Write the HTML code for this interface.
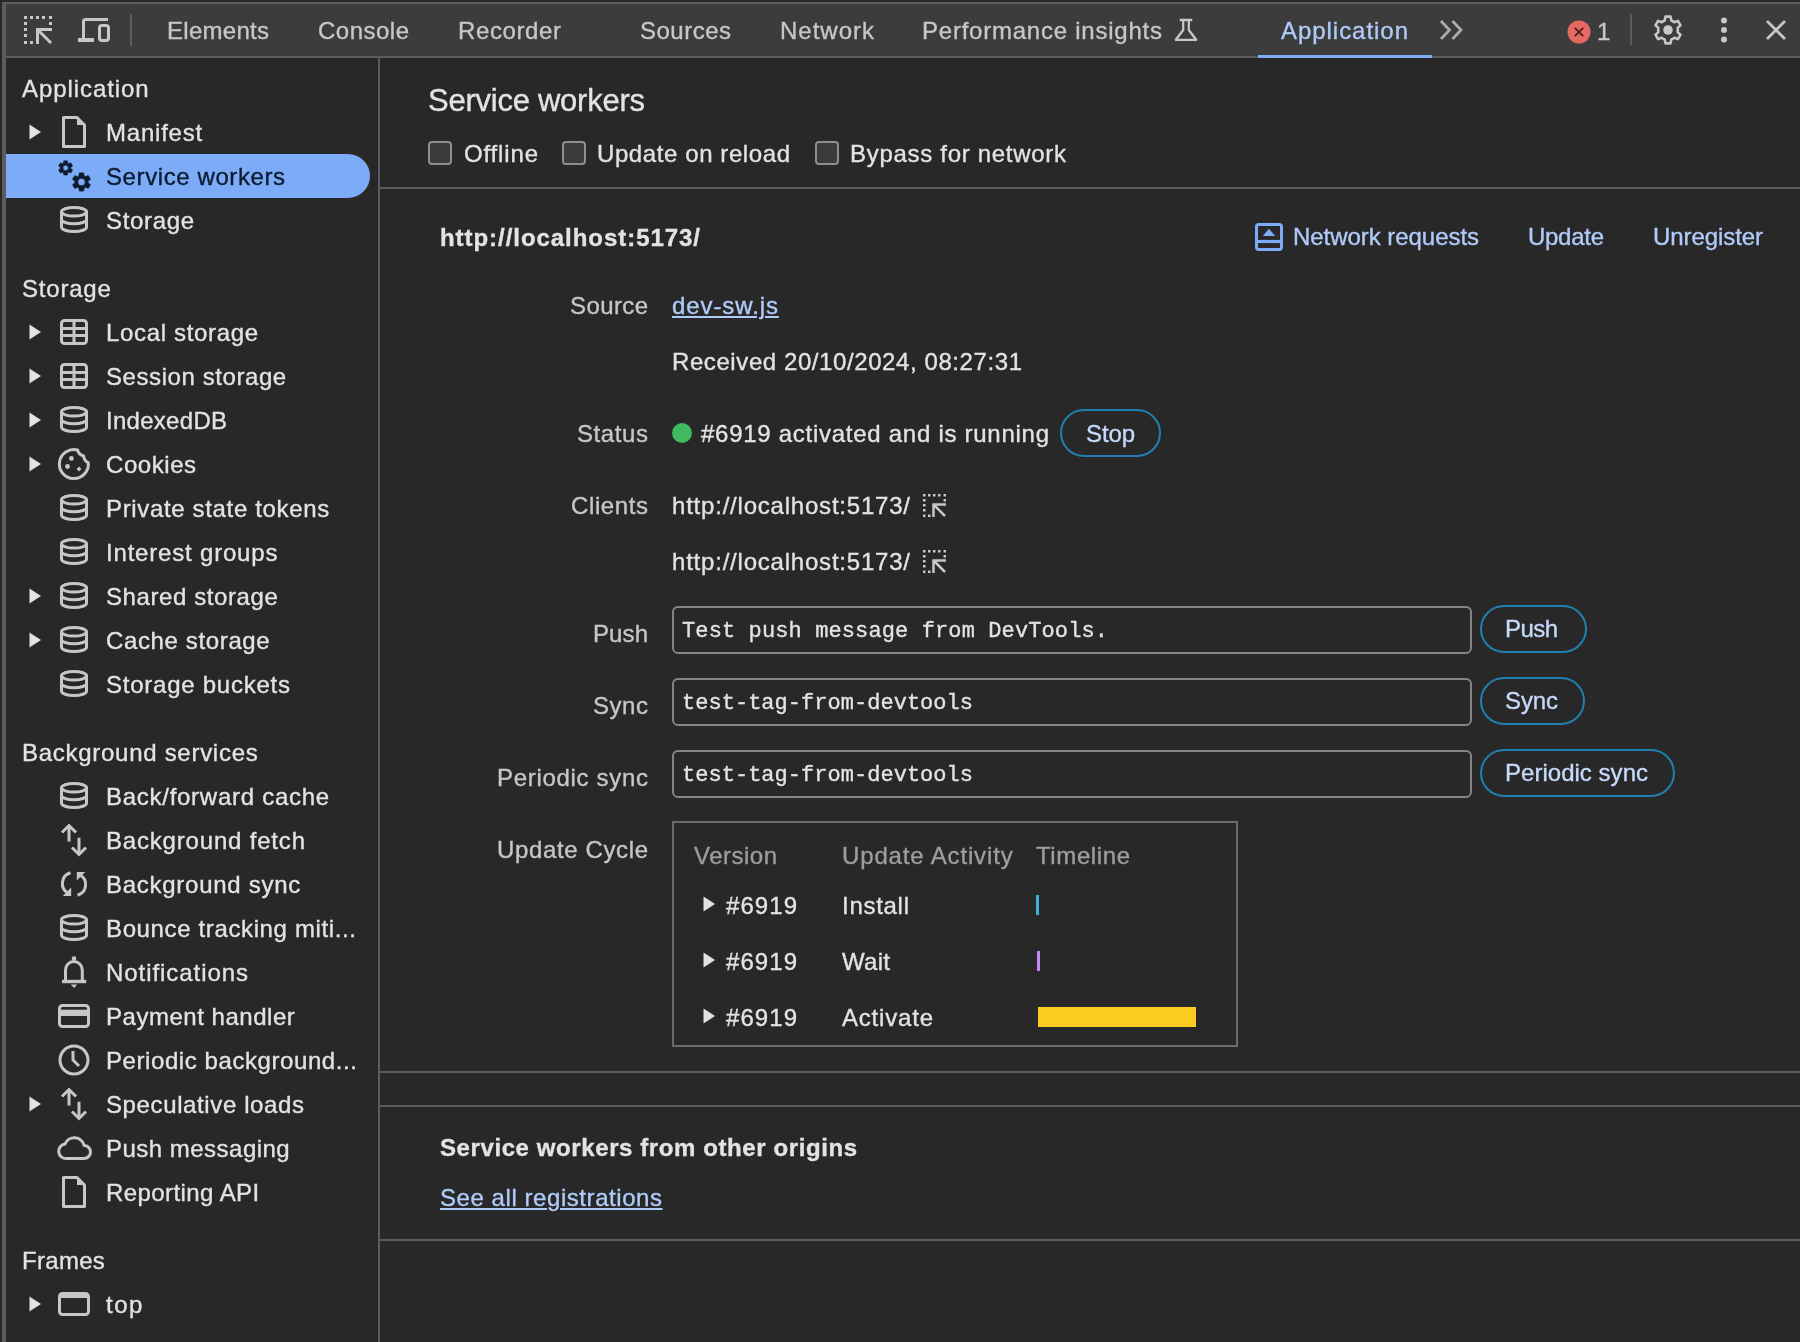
<!DOCTYPE html>
<html><head><meta charset="utf-8">
<style>
html,body{margin:0;padding:0;}
body{width:1800px;height:1342px;overflow:hidden;background:#282828;position:relative;font-family:"Liberation Sans",sans-serif;}
.t{position:absolute;white-space:nowrap;line-height:1;will-change:transform;-webkit-text-stroke:0.35px currentColor;}
.ic{position:absolute;overflow:visible;}
.b{position:absolute;box-sizing:border-box;}
</style></head><body>
<!-- frame -->
<div class="b" style="left:0;top:0;width:1800px;height:2px;background:#282828"></div>
<div class="b" style="left:0;top:0;width:2px;height:1342px;background:#282828"></div>
<div class="b" style="left:2px;top:2px;width:1798px;height:2px;background:#5c5c5c"></div>
<div class="b" style="left:2px;top:2px;width:4px;height:1340px;background:#5c5c5c"></div>
<!-- toolbar -->
<div class="b" style="left:6px;top:4px;width:1794px;height:52px;background:#3c3c3c"></div>
<div class="b" style="left:6px;top:56px;width:1794px;height:2px;background:#5c5c5c"></div>
<div class="b" style="left:1258px;top:55px;width:174px;height:3px;background:#7cacf8"></div>
<div class="b" style="left:130px;top:14px;width:2px;height:32px;background:#5c5c5c"></div>
<div class="b" style="left:1630px;top:14px;width:2px;height:31px;background:#5c5c5c"></div>
<!-- inspect icon -->
<svg class="ic" style="left:20px;top:12px" width="40" height="36" viewBox="0 0 40 36">
 <g fill="#c7c7c7">
  <rect x="4" y="4" width="3" height="3"/><rect x="10" y="4" width="3" height="3"/><rect x="16" y="4" width="3" height="3"/><rect x="22" y="4" width="3" height="3"/><rect x="29" y="4" width="3" height="3"/>
  <rect x="4" y="10" width="3" height="3"/><rect x="4" y="16" width="3" height="3"/><rect x="4" y="22" width="3" height="3"/><rect x="4" y="29" width="3" height="3"/>
  <rect x="10" y="29" width="3" height="3"/><rect x="29" y="10" width="3" height="3"/>
 </g>
 <path d="M17.5 32V17.5H32M17.5 17.5L31 31" fill="none" stroke="#c7c7c7" stroke-width="3"/>
</svg>
<!-- device icon -->
<svg class="ic" style="left:76px;top:16px" width="36" height="28" viewBox="0 0 36 28">
 <path d="M7.5 23V5.5Q7.5 3.5 9.5 3.5H32" fill="none" stroke="#c7c7c7" stroke-width="3"/>
 <rect x="2" y="22" width="16" height="4" fill="#c7c7c7"/>
 <rect x="23.5" y="9.5" width="9" height="15" rx="2.5" fill="none" stroke="#c7c7c7" stroke-width="3"/>
</svg>
<!-- flask icon -->
<svg class="ic" style="left:1172px;top:14px" width="30" height="32" viewBox="0 0 30 32">
 <path d="M7.7 6H20.3M11.2 6V16L3.8 25.8H24.2L16.8 16V6" fill="none" stroke="#c7c7c7" stroke-width="2.3" stroke-linejoin="round"/>
</svg>
<!-- >> -->
<svg class="ic" style="left:1438px;top:18px" width="28" height="24" viewBox="0 0 28 24">
 <path d="M3 3L11.5 12L3 21M14.5 3L23 12L14.5 21" fill="none" stroke="#ababab" stroke-width="2.8"/>
</svg>
<!-- error icon -->
<svg class="ic" style="left:1566px;top:19px" width="26" height="26" viewBox="0 0 26 26">
 <circle cx="13" cy="13" r="11.5" fill="#e46962"/>
 <path d="M8.8 8.8L17.2 17.2M17.2 8.8L8.8 17.2" stroke="#4a1c1c" stroke-width="1.7"/>
</svg>
<!-- gear -->
<svg class="ic" style="left:1650px;top:12px" width="36" height="36" viewBox="0 0 36 36"><g transform="translate(18 18) scale(0.92) translate(-18 -18)">
 <path d="M15.2 3.5H20.8L21.6 7.6Q23.4 8.3 24.9 9.5L28.8 8.1L31.6 12.9L28.5 15.7Q28.8 18 28.5 20.3L31.6 23.1L28.8 27.9L24.9 26.5Q23.4 27.7 21.6 28.4L20.8 32.5H15.2L14.4 28.4Q12.6 27.7 11.1 26.5L7.2 27.9L4.4 23.1L7.5 20.3Q7.2 18 7.5 15.7L4.4 12.9L7.2 8.1L11.1 9.5Q12.6 8.3 14.4 7.6Z" fill="none" stroke="#c7c7c7" stroke-width="2.8" stroke-linejoin="round"/>
 <circle cx="18" cy="18" r="5.2" fill="#c7c7c7"/></g>
</svg>
<!-- kebab -->
<svg class="ic" style="left:1716px;top:14px" width="16" height="32" viewBox="0 0 16 32">
 <circle cx="8" cy="6.5" r="3" fill="#c7c7c7"/><circle cx="8" cy="16" r="3" fill="#c7c7c7"/><circle cx="8" cy="25.5" r="3" fill="#c7c7c7"/>
</svg>
<!-- close -->
<svg class="ic" style="left:1762px;top:16px" width="28" height="28" viewBox="0 0 28 28">
 <path d="M5 5L23 23M23 5L5 23" stroke="#c7c7c7" stroke-width="2.8"/>
</svg>

<!-- sidebar -->
<div class="b" style="left:378px;top:58px;width:2px;height:1284px;background:#5c5c5c"></div>
<div class="b" style="left:6px;top:154px;width:364px;height:44px;background:#7cacf8;border-radius:0 22px 22px 0"></div>

<!-- main -->
<div class="b" style="left:380px;top:187px;width:1420px;height:2px;background:#5c5c5c"></div>
<div class="b" style="left:380px;top:1071px;width:1420px;height:2px;background:#5c5c5c"></div>
<div class="b" style="left:380px;top:1105px;width:1420px;height:2px;background:#5c5c5c"></div>
<div class="b" style="left:380px;top:1239px;width:1420px;height:2px;background:#5c5c5c"></div>
<!-- checkboxes -->
<div class="b" style="left:428px;top:141px;width:24px;height:24px;border:2px solid #8e8e8e;border-radius:4px;background:#3b3b3b"></div>
<div class="b" style="left:562px;top:141px;width:24px;height:24px;border:2px solid #8e8e8e;border-radius:4px;background:#3b3b3b"></div>
<div class="b" style="left:815px;top:141px;width:24px;height:24px;border:2px solid #8e8e8e;border-radius:4px;background:#3b3b3b"></div>
<!-- network requests icon -->
<svg class="ic" style="left:1252px;top:220px" width="34" height="34" viewBox="0 0 34 34">
 <rect x="4.5" y="4.4" width="25" height="25" rx="2.2" fill="none" stroke="#7cacf8" stroke-width="3"/>
 <path d="M5 21.5H29" stroke="#7cacf8" stroke-width="3.2"/>
 <path d="M10.7 16H23.3L17 8.8Z" fill="#7cacf8"/>
</svg>
<!-- status dot -->
<div class="b" style="left:672px;top:423px;width:20px;height:20px;border-radius:50%;background:#3fba5e"></div>
<!-- stop button -->
<div class="b" style="left:1060px;top:409px;width:101px;height:48px;border:2.5px solid #1f80b0;border-radius:24px"></div>
<!-- client icons -->
<svg class="ic" style="left:920px;top:491px" width="30" height="28" viewBox="0 0 30 28">
 <g fill="#c7c7c7"><rect x="3" y="3" width="2.5" height="2.5"/><rect x="8" y="3" width="2.5" height="2.5"/><rect x="13" y="3" width="2.5" height="2.5"/><rect x="18" y="3" width="2.5" height="2.5"/><rect x="23.5" y="3" width="2.5" height="2.5"/>
 <rect x="3" y="8" width="2.5" height="2.5"/><rect x="3" y="13" width="2.5" height="2.5"/><rect x="3" y="18" width="2.5" height="2.5"/><rect x="3" y="23.5" width="2.5" height="2.5"/><rect x="8" y="23.5" width="2.5" height="2.5"/><rect x="23.5" y="8" width="2.5" height="2.5"/></g>
 <path d="M13.5 26V13.5H26M13.5 13.5L25 25" fill="none" stroke="#c7c7c7" stroke-width="2.5"/>
</svg>
<svg class="ic" style="left:920px;top:547px" width="30" height="28" viewBox="0 0 30 28">
 <g fill="#c7c7c7"><rect x="3" y="3" width="2.5" height="2.5"/><rect x="8" y="3" width="2.5" height="2.5"/><rect x="13" y="3" width="2.5" height="2.5"/><rect x="18" y="3" width="2.5" height="2.5"/><rect x="23.5" y="3" width="2.5" height="2.5"/>
 <rect x="3" y="8" width="2.5" height="2.5"/><rect x="3" y="13" width="2.5" height="2.5"/><rect x="3" y="18" width="2.5" height="2.5"/><rect x="3" y="23.5" width="2.5" height="2.5"/><rect x="8" y="23.5" width="2.5" height="2.5"/><rect x="23.5" y="8" width="2.5" height="2.5"/></g>
 <path d="M13.5 26V13.5H26M13.5 13.5L25 25" fill="none" stroke="#c7c7c7" stroke-width="2.5"/>
</svg>
<!-- inputs -->
<div class="b" style="left:672px;top:606px;width:800px;height:48px;border:2px solid #858585;border-radius:6px"></div>
<div class="b" style="left:672px;top:678px;width:800px;height:48px;border:2px solid #858585;border-radius:6px"></div>
<div class="b" style="left:672px;top:750px;width:800px;height:48px;border:2px solid #858585;border-radius:6px"></div>
<!-- buttons -->
<div class="b" style="left:1480px;top:605px;width:107px;height:48px;border:2.5px solid #1f80b0;border-radius:24px"></div>
<div class="b" style="left:1480px;top:677px;width:105px;height:48px;border:2.5px solid #1f80b0;border-radius:24px"></div>
<div class="b" style="left:1480px;top:749px;width:195px;height:48px;border:2.5px solid #1f80b0;border-radius:24px"></div>
<!-- update cycle table -->
<div class="b" style="left:672px;top:821px;width:566px;height:226px;border:2px solid #6b6b6b"></div>
<svg class="ic" style="left:702px;top:896px" width="14" height="16" viewBox="0 0 14 16"><path d="M1.5 0.6L13 8L1.5 15.4Z" fill="#e3e3e3"/></svg>
<svg class="ic" style="left:702px;top:952px" width="14" height="16" viewBox="0 0 14 16"><path d="M1.5 0.6L13 8L1.5 15.4Z" fill="#e3e3e3"/></svg>
<svg class="ic" style="left:702px;top:1008px" width="14" height="16" viewBox="0 0 14 16"><path d="M1.5 0.6L13 8L1.5 15.4Z" fill="#e3e3e3"/></svg>
<div class="b" style="left:1036px;top:895px;width:2.5px;height:20px;background:#3fb0d8"></div>
<div class="b" style="left:1037px;top:951px;width:2.5px;height:20px;background:#c58af9"></div>
<div class="b" style="left:1038px;top:1007px;width:158px;height:20px;background:#f9cc1f"></div>

<svg class="ic" style="left:28px;top:124px" width="14" height="16" viewBox="0 0 14 16"><path d="M1.5 0.6L13 8L1.5 15.4Z" fill="#e3e3e3"/></svg>
<svg class="ic" style="left:58px;top:116px" width="32" height="32" viewBox="0 0 32 32"><path d="M5.5 1.5H19L26.5 9V30.5H5.5Z" fill="none" stroke="#c7c7c7" stroke-width="3" stroke-linejoin="round"/><path d="M19 1.5L26.5 9H19Z" fill="#c7c7c7"/></svg>
<svg class="ic" style="left:58px;top:160px" width="32" height="32" viewBox="0 0 32 32"><path d="M5.41 3.41 L5.86 0.91 L9.34 0.91 L9.79 3.41 L10.40 3.75 L12.78 2.90 L14.52 5.92 L12.59 7.55 L12.59 8.25 L14.52 9.88 L12.78 12.90 L10.40 12.05 L9.79 12.39 L9.34 14.89 L5.86 14.89 L5.41 12.39 L4.80 12.05 L2.42 12.90 L0.68 9.88 L2.61 8.25 L2.61 7.55 L0.68 5.92 L2.42 2.90 L4.80 3.75Z M10.40 7.90 A2.8 2.8 0 1 0 4.80 7.90 A2.8 2.8 0 1 0 10.40 7.90Z" fill="#0d1a30" fill-rule="evenodd" stroke="#0d1a30" stroke-width="0.8" stroke-linejoin="round"/><path d="M20.86 16.06 L21.41 12.94 L25.59 12.94 L26.14 16.06 L27.32 16.74 L30.30 15.66 L32.39 19.28 L29.96 21.32 L29.96 22.68 L32.39 24.72 L30.30 28.34 L27.32 27.26 L26.14 27.94 L25.59 31.06 L21.41 31.06 L20.86 27.94 L19.68 27.26 L16.70 28.34 L14.61 24.72 L17.04 22.68 L17.04 21.32 L14.61 19.28 L16.70 15.66 L19.68 16.74Z M27.30 22.00 A3.8 3.8 0 1 0 19.70 22.00 A3.8 3.8 0 1 0 27.30 22.00Z" fill="#0d1a30" fill-rule="evenodd" stroke="#0d1a30" stroke-width="0.8" stroke-linejoin="round"/></svg>
<svg class="ic" style="left:58px;top:204px" width="32" height="32" viewBox="0 0 32 32"><ellipse cx="16" cy="7.8" rx="12.5" ry="4.3" fill="none" stroke="#c7c7c7" stroke-width="3"/><path d="M3.5 7.8V23.2A12.5 4.3 0 0 0 28.5 23.2V7.8" fill="none" stroke="#c7c7c7" stroke-width="3"/><path d="M3.5 15.5A12.5 4.3 0 0 0 28.5 15.5" fill="none" stroke="#c7c7c7" stroke-width="3"/></svg>
<svg class="ic" style="left:28px;top:324px" width="14" height="16" viewBox="0 0 14 16"><path d="M1.5 0.6L13 8L1.5 15.4Z" fill="#e3e3e3"/></svg>
<svg class="ic" style="left:58px;top:316px" width="32" height="32" viewBox="0 0 32 32"><rect x="3.5" y="4.5" width="25" height="23" rx="3" fill="none" stroke="#c7c7c7" stroke-width="3"/><path d="M16 5V27M4 12.4H28M4 19.6H28" fill="none" stroke="#c7c7c7" stroke-width="3"/></svg>
<svg class="ic" style="left:28px;top:368px" width="14" height="16" viewBox="0 0 14 16"><path d="M1.5 0.6L13 8L1.5 15.4Z" fill="#e3e3e3"/></svg>
<svg class="ic" style="left:58px;top:360px" width="32" height="32" viewBox="0 0 32 32"><rect x="3.5" y="4.5" width="25" height="23" rx="3" fill="none" stroke="#c7c7c7" stroke-width="3"/><path d="M16 5V27M4 12.4H28M4 19.6H28" fill="none" stroke="#c7c7c7" stroke-width="3"/></svg>
<svg class="ic" style="left:28px;top:412px" width="14" height="16" viewBox="0 0 14 16"><path d="M1.5 0.6L13 8L1.5 15.4Z" fill="#e3e3e3"/></svg>
<svg class="ic" style="left:58px;top:404px" width="32" height="32" viewBox="0 0 32 32"><ellipse cx="16" cy="7.8" rx="12.5" ry="4.3" fill="none" stroke="#c7c7c7" stroke-width="3"/><path d="M3.5 7.8V23.2A12.5 4.3 0 0 0 28.5 23.2V7.8" fill="none" stroke="#c7c7c7" stroke-width="3"/><path d="M3.5 15.5A12.5 4.3 0 0 0 28.5 15.5" fill="none" stroke="#c7c7c7" stroke-width="3"/></svg>
<svg class="ic" style="left:28px;top:456px" width="14" height="16" viewBox="0 0 14 16"><path d="M1.5 0.6L13 8L1.5 15.4Z" fill="#e3e3e3"/></svg>
<svg class="ic" style="left:58px;top:448px" width="32" height="32" viewBox="0 0 32 32"><path d="M30.3 14.6A14.5 14.5 0 1 1 19.5 2C20.5 5.5 22.5 7.2 25.5 7.8C26 11 27.5 13.8 30.3 14.6Z" fill="none" stroke="#c7c7c7" stroke-width="3" stroke-linejoin="round"/><circle cx="13.4" cy="10.4" r="2.4" fill="#c7c7c7"/><circle cx="9.5" cy="18.5" r="2.4" fill="#c7c7c7"/><rect x="19.3" y="19.3" width="3.4" height="3.4" transform="rotate(45 21 21)" fill="#c7c7c7"/></svg>
<svg class="ic" style="left:58px;top:492px" width="32" height="32" viewBox="0 0 32 32"><ellipse cx="16" cy="7.8" rx="12.5" ry="4.3" fill="none" stroke="#c7c7c7" stroke-width="3"/><path d="M3.5 7.8V23.2A12.5 4.3 0 0 0 28.5 23.2V7.8" fill="none" stroke="#c7c7c7" stroke-width="3"/><path d="M3.5 15.5A12.5 4.3 0 0 0 28.5 15.5" fill="none" stroke="#c7c7c7" stroke-width="3"/></svg>
<svg class="ic" style="left:58px;top:536px" width="32" height="32" viewBox="0 0 32 32"><ellipse cx="16" cy="7.8" rx="12.5" ry="4.3" fill="none" stroke="#c7c7c7" stroke-width="3"/><path d="M3.5 7.8V23.2A12.5 4.3 0 0 0 28.5 23.2V7.8" fill="none" stroke="#c7c7c7" stroke-width="3"/><path d="M3.5 15.5A12.5 4.3 0 0 0 28.5 15.5" fill="none" stroke="#c7c7c7" stroke-width="3"/></svg>
<svg class="ic" style="left:28px;top:588px" width="14" height="16" viewBox="0 0 14 16"><path d="M1.5 0.6L13 8L1.5 15.4Z" fill="#e3e3e3"/></svg>
<svg class="ic" style="left:58px;top:580px" width="32" height="32" viewBox="0 0 32 32"><ellipse cx="16" cy="7.8" rx="12.5" ry="4.3" fill="none" stroke="#c7c7c7" stroke-width="3"/><path d="M3.5 7.8V23.2A12.5 4.3 0 0 0 28.5 23.2V7.8" fill="none" stroke="#c7c7c7" stroke-width="3"/><path d="M3.5 15.5A12.5 4.3 0 0 0 28.5 15.5" fill="none" stroke="#c7c7c7" stroke-width="3"/></svg>
<svg class="ic" style="left:28px;top:632px" width="14" height="16" viewBox="0 0 14 16"><path d="M1.5 0.6L13 8L1.5 15.4Z" fill="#e3e3e3"/></svg>
<svg class="ic" style="left:58px;top:624px" width="32" height="32" viewBox="0 0 32 32"><ellipse cx="16" cy="7.8" rx="12.5" ry="4.3" fill="none" stroke="#c7c7c7" stroke-width="3"/><path d="M3.5 7.8V23.2A12.5 4.3 0 0 0 28.5 23.2V7.8" fill="none" stroke="#c7c7c7" stroke-width="3"/><path d="M3.5 15.5A12.5 4.3 0 0 0 28.5 15.5" fill="none" stroke="#c7c7c7" stroke-width="3"/></svg>
<svg class="ic" style="left:58px;top:668px" width="32" height="32" viewBox="0 0 32 32"><ellipse cx="16" cy="7.8" rx="12.5" ry="4.3" fill="none" stroke="#c7c7c7" stroke-width="3"/><path d="M3.5 7.8V23.2A12.5 4.3 0 0 0 28.5 23.2V7.8" fill="none" stroke="#c7c7c7" stroke-width="3"/><path d="M3.5 15.5A12.5 4.3 0 0 0 28.5 15.5" fill="none" stroke="#c7c7c7" stroke-width="3"/></svg>
<svg class="ic" style="left:58px;top:780px" width="32" height="32" viewBox="0 0 32 32"><ellipse cx="16" cy="7.8" rx="12.5" ry="4.3" fill="none" stroke="#c7c7c7" stroke-width="3"/><path d="M3.5 7.8V23.2A12.5 4.3 0 0 0 28.5 23.2V7.8" fill="none" stroke="#c7c7c7" stroke-width="3"/><path d="M3.5 15.5A12.5 4.3 0 0 0 28.5 15.5" fill="none" stroke="#c7c7c7" stroke-width="3"/></svg>
<svg class="ic" style="left:58px;top:824px" width="32" height="32" viewBox="0 0 32 32"><path d="M11 2V17.6M4 8.5L11 1.5L18 8.5" fill="none" stroke="#c7c7c7" stroke-width="3"/><path d="M21 13.7V30M14 23.5L21 30.5L28 23.5" fill="none" stroke="#c7c7c7" stroke-width="3"/></svg>
<svg class="ic" style="left:58px;top:868px" width="32" height="32" viewBox="0 0 32 32"><path d="M12.5 4.8A11 11 0 0 0 10 25" fill="none" stroke="#c7c7c7" stroke-width="3"/><path d="M19.5 27.2A11 11 0 0 0 22 7" fill="none" stroke="#c7c7c7" stroke-width="3"/><path d="M13.2 19.5V28H4.8Z" fill="#c7c7c7"/><path d="M18.8 12.5V4H27.2Z" fill="#c7c7c7"/></svg>
<svg class="ic" style="left:58px;top:912px" width="32" height="32" viewBox="0 0 32 32"><ellipse cx="16" cy="7.8" rx="12.5" ry="4.3" fill="none" stroke="#c7c7c7" stroke-width="3"/><path d="M3.5 7.8V23.2A12.5 4.3 0 0 0 28.5 23.2V7.8" fill="none" stroke="#c7c7c7" stroke-width="3"/><path d="M3.5 15.5A12.5 4.3 0 0 0 28.5 15.5" fill="none" stroke="#c7c7c7" stroke-width="3"/></svg>
<svg class="ic" style="left:58px;top:956px" width="32" height="32" viewBox="0 0 32 32"><path d="M7.5 25V14A8.4 8.4 0 0 1 24.3 14V25" fill="none" stroke="#c7c7c7" stroke-width="3"/><path d="M4 25.5H28.2" stroke="#c7c7c7" stroke-width="3.4"/><circle cx="16" cy="2.6" r="2.3" fill="#c7c7c7"/><path d="M12.8 28.5H19.2L16 32Z" fill="#c7c7c7"/></svg>
<svg class="ic" style="left:58px;top:1000px" width="32" height="32" viewBox="0 0 32 32"><rect x="1.5" y="5.5" width="29" height="21" rx="3" fill="none" stroke="#c7c7c7" stroke-width="3"/><path d="M2 12.85H30" stroke="#c7c7c7" stroke-width="6.3"/></svg>
<svg class="ic" style="left:58px;top:1044px" width="32" height="32" viewBox="0 0 32 32"><circle cx="16" cy="16" r="14" fill="none" stroke="#c7c7c7" stroke-width="3"/><path d="M15 7V16L21 22" fill="none" stroke="#c7c7c7" stroke-width="3"/></svg>
<svg class="ic" style="left:28px;top:1096px" width="14" height="16" viewBox="0 0 14 16"><path d="M1.5 0.6L13 8L1.5 15.4Z" fill="#e3e3e3"/></svg>
<svg class="ic" style="left:58px;top:1088px" width="32" height="32" viewBox="0 0 32 32"><path d="M11 2V17.6M4 8.5L11 1.5L18 8.5" fill="none" stroke="#c7c7c7" stroke-width="3"/><path d="M21 13.7V30M14 23.5L21 30.5L28 23.5" fill="none" stroke="#c7c7c7" stroke-width="3"/></svg>
<svg class="ic" style="left:58px;top:1131px" width="32" height="32" viewBox="0 0 32 32"><path d="M9 27.5H26A6.5 6.5 0 0 0 26 14.5A10 10 0 0 0 7 13A7.3 7.3 0 0 0 9 27.5Z" fill="none" stroke="#c7c7c7" stroke-width="3" stroke-linejoin="round"/></svg>
<svg class="ic" style="left:58px;top:1176px" width="32" height="32" viewBox="0 0 32 32"><path d="M5.5 1.5H19L26.5 9V30.5H5.5Z" fill="none" stroke="#c7c7c7" stroke-width="3" stroke-linejoin="round"/><path d="M19 1.5L26.5 9H19Z" fill="#c7c7c7"/></svg>
<svg class="ic" style="left:28px;top:1296px" width="14" height="16" viewBox="0 0 14 16"><path d="M1.5 0.6L13 8L1.5 15.4Z" fill="#e3e3e3"/></svg>
<svg class="ic" style="left:58px;top:1288px" width="32" height="32" viewBox="0 0 32 32"><rect x="1.5" y="5.5" width="29" height="21" rx="3" fill="none" stroke="#c7c7c7" stroke-width="3"/><path d="M2 8.5H30" stroke="#c7c7c7" stroke-width="3"/></svg>
<div class="t" style="left:166.5px;top:19.2px;font-size:24px;font-weight:400;color:#c7c7c7;letter-spacing:0.280px;font-family:'Liberation Sans', sans-serif;">Elements</div>
<div class="t" style="left:317.5px;top:19.2px;font-size:24px;font-weight:400;color:#c7c7c7;letter-spacing:0.491px;font-family:'Liberation Sans', sans-serif;">Console</div>
<div class="t" style="left:457.5px;top:19.2px;font-size:24px;font-weight:400;color:#c7c7c7;letter-spacing:0.613px;font-family:'Liberation Sans', sans-serif;">Recorder</div>
<div class="t" style="left:639.5px;top:19.2px;font-size:24px;font-weight:400;color:#c7c7c7;letter-spacing:0.493px;font-family:'Liberation Sans', sans-serif;">Sources</div>
<div class="t" style="left:779.5px;top:19.2px;font-size:24px;font-weight:400;color:#c7c7c7;letter-spacing:0.997px;font-family:'Liberation Sans', sans-serif;">Network</div>
<div class="t" style="left:921.5px;top:19.2px;font-size:24px;font-weight:400;color:#c7c7c7;letter-spacing:0.767px;font-family:'Liberation Sans', sans-serif;">Performance insights</div>
<div class="t" style="left:1280.5px;top:19.2px;font-size:24px;font-weight:400;color:#b0cbfa;letter-spacing:0.959px;font-family:'Liberation Sans', sans-serif;">Application</div>
<div class="t" style="left:1596.5px;top:19.7px;font-size:24px;font-weight:400;color:#c7c7c7;letter-spacing:0.600px;font-family:'Liberation Sans', sans-serif;">1</div>
<div class="t" style="left:21.5px;top:77.1px;font-size:24px;font-weight:400;color:#e3e3e3;letter-spacing:0.929px;font-family:'Liberation Sans', sans-serif;">Application</div>
<div class="t" style="left:106.0px;top:121.1px;font-size:24px;font-weight:400;color:#e3e3e3;letter-spacing:0.785px;font-family:'Liberation Sans', sans-serif;">Manifest</div>
<div class="t" style="left:106.0px;top:165.1px;font-size:24px;font-weight:400;color:#0d1a30;letter-spacing:0.599px;font-family:'Liberation Sans', sans-serif;">Service workers</div>
<div class="t" style="left:106.0px;top:209.1px;font-size:24px;font-weight:400;color:#e3e3e3;letter-spacing:0.657px;font-family:'Liberation Sans', sans-serif;">Storage</div>
<div class="t" style="left:21.5px;top:277.1px;font-size:24px;font-weight:400;color:#e3e3e3;letter-spacing:0.790px;font-family:'Liberation Sans', sans-serif;">Storage</div>
<div class="t" style="left:106.0px;top:321.1px;font-size:24px;font-weight:400;color:#e3e3e3;letter-spacing:0.667px;font-family:'Liberation Sans', sans-serif;">Local storage</div>
<div class="t" style="left:106.0px;top:365.1px;font-size:24px;font-weight:400;color:#e3e3e3;letter-spacing:0.578px;font-family:'Liberation Sans', sans-serif;">Session storage</div>
<div class="t" style="left:106.0px;top:409.1px;font-size:24px;font-weight:400;color:#e3e3e3;letter-spacing:0.282px;font-family:'Liberation Sans', sans-serif;">IndexedDB</div>
<div class="t" style="left:106.0px;top:453.1px;font-size:24px;font-weight:400;color:#e3e3e3;letter-spacing:0.565px;font-family:'Liberation Sans', sans-serif;">Cookies</div>
<div class="t" style="left:106.0px;top:497.1px;font-size:24px;font-weight:400;color:#e3e3e3;letter-spacing:0.654px;font-family:'Liberation Sans', sans-serif;">Private state tokens</div>
<div class="t" style="left:106.0px;top:541.1px;font-size:24px;font-weight:400;color:#e3e3e3;letter-spacing:0.808px;font-family:'Liberation Sans', sans-serif;">Interest groups</div>
<div class="t" style="left:106.0px;top:585.1px;font-size:24px;font-weight:400;color:#e3e3e3;letter-spacing:0.592px;font-family:'Liberation Sans', sans-serif;">Shared storage</div>
<div class="t" style="left:106.0px;top:629.1px;font-size:24px;font-weight:400;color:#e3e3e3;letter-spacing:0.634px;font-family:'Liberation Sans', sans-serif;">Cache storage</div>
<div class="t" style="left:106.0px;top:673.1px;font-size:24px;font-weight:400;color:#e3e3e3;letter-spacing:0.754px;font-family:'Liberation Sans', sans-serif;">Storage buckets</div>
<div class="t" style="left:21.5px;top:741.1px;font-size:24px;font-weight:400;color:#e3e3e3;letter-spacing:0.718px;font-family:'Liberation Sans', sans-serif;">Background services</div>
<div class="t" style="left:106.0px;top:785.1px;font-size:24px;font-weight:400;color:#e3e3e3;letter-spacing:0.726px;font-family:'Liberation Sans', sans-serif;">Back/forward cache</div>
<div class="t" style="left:106.0px;top:829.1px;font-size:24px;font-weight:400;color:#e3e3e3;letter-spacing:0.814px;font-family:'Liberation Sans', sans-serif;">Background fetch</div>
<div class="t" style="left:106.0px;top:873.1px;font-size:24px;font-weight:400;color:#e3e3e3;letter-spacing:0.728px;font-family:'Liberation Sans', sans-serif;">Background sync</div>
<div class="t" style="left:106.0px;top:917.1px;font-size:24px;font-weight:400;color:#e3e3e3;letter-spacing:0.632px;font-family:'Liberation Sans', sans-serif;">Bounce tracking miti...</div>
<div class="t" style="left:106.0px;top:961.1px;font-size:24px;font-weight:400;color:#e3e3e3;letter-spacing:0.940px;font-family:'Liberation Sans', sans-serif;">Notifications</div>
<div class="t" style="left:106.0px;top:1005.1px;font-size:24px;font-weight:400;color:#e3e3e3;letter-spacing:0.526px;font-family:'Liberation Sans', sans-serif;">Payment handler</div>
<div class="t" style="left:106.0px;top:1049.1px;font-size:24px;font-weight:400;color:#e3e3e3;letter-spacing:0.576px;font-family:'Liberation Sans', sans-serif;">Periodic background...</div>
<div class="t" style="left:106.0px;top:1093.1px;font-size:24px;font-weight:400;color:#e3e3e3;letter-spacing:0.617px;font-family:'Liberation Sans', sans-serif;">Speculative loads</div>
<div class="t" style="left:106.0px;top:1137.1px;font-size:24px;font-weight:400;color:#e3e3e3;letter-spacing:0.482px;font-family:'Liberation Sans', sans-serif;">Push messaging</div>
<div class="t" style="left:106.0px;top:1181.1px;font-size:24px;font-weight:400;color:#e3e3e3;letter-spacing:0.424px;font-family:'Liberation Sans', sans-serif;">Reporting API</div>
<div class="t" style="left:21.5px;top:1249.1px;font-size:24px;font-weight:400;color:#e3e3e3;letter-spacing:0.292px;font-family:'Liberation Sans', sans-serif;">Frames</div>
<div class="t" style="left:106.0px;top:1293.1px;font-size:24px;font-weight:400;color:#e3e3e3;letter-spacing:1.468px;font-family:'Liberation Sans', sans-serif;">top</div>
<div class="t" style="left:427.5px;top:85.3px;font-size:31px;font-weight:400;color:#e3e3e3;letter-spacing:-0.250px;font-family:'Liberation Sans', sans-serif;">Service workers</div>
<div class="t" style="left:463.5px;top:141.7px;font-size:24px;font-weight:400;color:#e3e3e3;letter-spacing:0.845px;font-family:'Liberation Sans', sans-serif;">Offline</div>
<div class="t" style="left:596.5px;top:141.7px;font-size:24px;font-weight:400;color:#e3e3e3;letter-spacing:0.591px;font-family:'Liberation Sans', sans-serif;">Update on reload</div>
<div class="t" style="left:849.5px;top:141.7px;font-size:24px;font-weight:400;color:#e3e3e3;letter-spacing:0.701px;font-family:'Liberation Sans', sans-serif;">Bypass for network</div>
<div class="t" style="left:439.5px;top:225.7px;font-size:24px;font-weight:700;color:#e3e3e3;letter-spacing:0.951px;font-family:'Liberation Sans', sans-serif;">http://localhost:5173/</div>
<div class="t" style="left:1292.5px;top:224.7px;font-size:24px;font-weight:400;color:#b0cbfa;letter-spacing:-0.049px;font-family:'Liberation Sans', sans-serif;">Network requests</div>
<div class="t" style="left:1527.5px;top:224.7px;font-size:24px;font-weight:400;color:#b0cbfa;letter-spacing:-0.278px;font-family:'Liberation Sans', sans-serif;">Update</div>
<div class="t" style="left:1652.5px;top:224.7px;font-size:24px;font-weight:400;color:#b0cbfa;letter-spacing:-0.079px;font-family:'Liberation Sans', sans-serif;">Unregister</div>
<div class="t" style="left:569.5px;top:293.7px;font-size:24px;font-weight:400;color:#c7c7c7;letter-spacing:0.391px;font-family:'Liberation Sans', sans-serif;">Source</div>
<div class="t" style="left:576.5px;top:421.7px;font-size:24px;font-weight:400;color:#c7c7c7;letter-spacing:0.592px;font-family:'Liberation Sans', sans-serif;">Status</div>
<div class="t" style="left:570.5px;top:493.7px;font-size:24px;font-weight:400;color:#c7c7c7;letter-spacing:0.607px;font-family:'Liberation Sans', sans-serif;">Clients</div>
<div class="t" style="left:592.5px;top:621.7px;font-size:24px;font-weight:400;color:#c7c7c7;letter-spacing:0.099px;font-family:'Liberation Sans', sans-serif;">Push</div>
<div class="t" style="left:592.5px;top:693.7px;font-size:24px;font-weight:400;color:#c7c7c7;letter-spacing:0.548px;font-family:'Liberation Sans', sans-serif;">Sync</div>
<div class="t" style="left:496.5px;top:765.7px;font-size:24px;font-weight:400;color:#c7c7c7;letter-spacing:0.690px;font-family:'Liberation Sans', sans-serif;">Periodic sync</div>
<div class="t" style="left:496.5px;top:837.7px;font-size:24px;font-weight:400;color:#c7c7c7;letter-spacing:0.630px;font-family:'Liberation Sans', sans-serif;">Update Cycle</div>
<div class="t" style="left:671.5px;top:293.7px;font-size:24px;font-weight:400;color:#b0cbfa;letter-spacing:0.913px;font-family:'Liberation Sans', sans-serif;text-decoration:underline;text-underline-offset:2px;text-decoration-thickness:2px;">dev-sw.js</div>
<div class="t" style="left:671.5px;top:349.7px;font-size:24px;font-weight:400;color:#e3e3e3;letter-spacing:0.586px;font-family:'Liberation Sans', sans-serif;">Received 20/10/2024, 08:27:31</div>
<div class="t" style="left:700.5px;top:421.7px;font-size:24px;font-weight:400;color:#e3e3e3;letter-spacing:0.727px;font-family:'Liberation Sans', sans-serif;">#6919 activated and is running</div>
<div class="t" style="left:1085.5px;top:421.7px;font-size:24px;font-weight:400;color:#c6dafc;letter-spacing:-0.124px;font-family:'Liberation Sans', sans-serif;">Stop</div>
<div class="t" style="left:671.5px;top:493.7px;font-size:24px;font-weight:400;color:#e3e3e3;letter-spacing:0.786px;font-family:'Liberation Sans', sans-serif;">http://localhost:5173/</div>
<div class="t" style="left:671.5px;top:549.7px;font-size:24px;font-weight:400;color:#e3e3e3;letter-spacing:0.786px;font-family:'Liberation Sans', sans-serif;">http://localhost:5173/</div>
<div class="t" style="left:681.5px;top:620.6px;font-size:22px;font-weight:400;color:#e3e3e3;letter-spacing:0.114px;font-family:'Liberation Mono', monospace;">Test push message from DevTools.</div>
<div class="t" style="left:681.5px;top:692.6px;font-size:22px;font-weight:400;color:#e3e3e3;letter-spacing:0.026px;font-family:'Liberation Mono', monospace;">test-tag-from-devtools</div>
<div class="t" style="left:681.5px;top:764.6px;font-size:22px;font-weight:400;color:#e3e3e3;letter-spacing:0.026px;font-family:'Liberation Mono', monospace;">test-tag-from-devtools</div>
<div class="t" style="left:1504.5px;top:616.7px;font-size:24px;font-weight:400;color:#c6dafc;letter-spacing:-0.568px;font-family:'Liberation Sans', sans-serif;">Push</div>
<div class="t" style="left:1504.5px;top:688.7px;font-size:24px;font-weight:400;color:#c6dafc;letter-spacing:-0.118px;font-family:'Liberation Sans', sans-serif;">Sync</div>
<div class="t" style="left:1504.5px;top:760.7px;font-size:24px;font-weight:400;color:#c6dafc;letter-spacing:0.023px;font-family:'Liberation Sans', sans-serif;">Periodic sync</div>
<div class="t" style="left:693.5px;top:843.7px;font-size:24px;font-weight:400;color:#9e9e9e;letter-spacing:0.492px;font-family:'Liberation Sans', sans-serif;">Version</div>
<div class="t" style="left:841.5px;top:843.7px;font-size:24px;font-weight:400;color:#9e9e9e;letter-spacing:0.852px;font-family:'Liberation Sans', sans-serif;">Update Activity</div>
<div class="t" style="left:1035.5px;top:843.7px;font-size:24px;font-weight:400;color:#9e9e9e;letter-spacing:0.600px;font-family:'Liberation Sans', sans-serif;">Timeline</div>
<div class="t" style="left:725.5px;top:893.7px;font-size:24px;font-weight:400;color:#e3e3e3;letter-spacing:1.065px;font-family:'Liberation Sans', sans-serif;">#6919</div>
<div class="t" style="left:841.5px;top:893.7px;font-size:24px;font-weight:400;color:#e3e3e3;letter-spacing:0.717px;font-family:'Liberation Sans', sans-serif;">Install</div>
<div class="t" style="left:725.5px;top:949.7px;font-size:24px;font-weight:400;color:#e3e3e3;letter-spacing:1.065px;font-family:'Liberation Sans', sans-serif;">#6919</div>
<div class="t" style="left:841.5px;top:949.7px;font-size:24px;font-weight:400;color:#e3e3e3;letter-spacing:0.297px;font-family:'Liberation Sans', sans-serif;">Wait</div>
<div class="t" style="left:725.5px;top:1005.7px;font-size:24px;font-weight:400;color:#e3e3e3;letter-spacing:1.065px;font-family:'Liberation Sans', sans-serif;">#6919</div>
<div class="t" style="left:841.5px;top:1005.7px;font-size:24px;font-weight:400;color:#e3e3e3;letter-spacing:0.804px;font-family:'Liberation Sans', sans-serif;">Activate</div>
<div class="t" style="left:439.5px;top:1136.0px;font-size:24px;font-weight:700;color:#e3e3e3;letter-spacing:0.592px;font-family:'Liberation Sans', sans-serif;">Service workers from other origins</div>
<div class="t" style="left:439.5px;top:1185.7px;font-size:24px;font-weight:400;color:#b0cbfa;letter-spacing:0.561px;font-family:'Liberation Sans', sans-serif;text-decoration:underline;text-underline-offset:2px;text-decoration-thickness:2px;">See all registrations</div>
</body></html>
